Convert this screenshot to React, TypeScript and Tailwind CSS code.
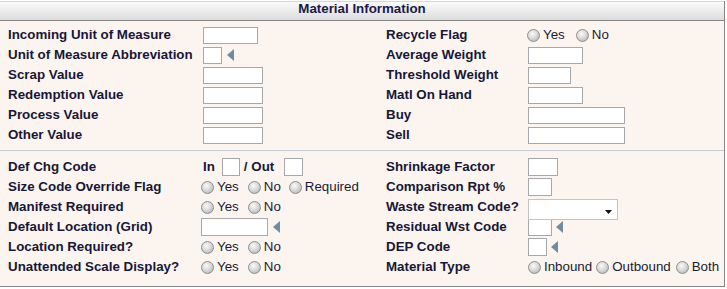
import React from "react";

const Box = ({ w, h = 17, className = "" }: { w: number; h?: number; className?: string }) => (
  <span
    className={`block bg-white border border-[#a7a7ae] box-border ${className}`}
    style={{ width: w, height: h }}
  />
);

const Tri = ({ className = "" }: { className?: string }) => (
  <span
    className={`block w-0 h-0 border-y-[6px] border-y-transparent border-r-[7px] border-r-[#6f8ca3] ${className}`}
  />
);

const Radio = ({ label, className = "" }: { label: string; className?: string }) => (
  <span className={`flex items-center ${className}`}>
    <span className="block w-[13px] h-[13px] mt-[2px] rounded-full border border-[#8e8e8e] box-border bg-[radial-gradient(circle_at_40%_35%,#fafafa_0%,#dadada_45%,#aaaaaa_100%)]" />
    <span className="ml-[3px] font-normal text-[#1a1a36]">{label}</span>
  </span>
);

const Row = ({
  label,
  labelW,
  children,
}: {
  label: string;
  labelW: string;
  children?: React.ReactNode;
}) => (
  <div className="flex items-center h-[20px]">
    <span className={`${labelW} shrink-0 font-bold text-[#17173a] whitespace-nowrap`}>{label}</span>
    <div className="flex items-center h-[20px]">{children}</div>
  </div>
);

export default function App() {
  const L = "w-[195px]";
  const R = "w-[142px]";
  return (
    <div className="w-[727px] h-[289px] bg-white font-['Liberation_Sans',Arial,sans-serif] text-[13.33px]">
      <div className="w-[725px] mt-px border-r border-b border-[#858585] bg-[#fcf5ef]">
        {/* Header */}
        <div className="h-[20px] box-border border-t border-[#d6d6d6] border-b border-b-[#858585] bg-[linear-gradient(#fbfbfb,#dcdcdc)] flex justify-center items-start">
          <span className="font-bold leading-[14px] text-[#1a1a4a]">Material Information</span>
        </div>

        {/* Section 1 */}
        <div className="flex pt-[4px] pb-[5px]">
          <div className="w-[386px] pl-[8px]">
            <Row label="Incoming Unit of Measure" labelW={L}>
              <Box w={55} />
            </Row>
            <Row label="Unit of Measure Abbreviation" labelW={L}>
              <Box w={19} />
              <Tri className="ml-[5px]" />
            </Row>
            <Row label="Scrap Value" labelW={L}>
              <Box w={60} />
            </Row>
            <Row label="Redemption Value" labelW={L}>
              <Box w={60} />
            </Row>
            <Row label="Process Value" labelW={L}>
              <Box w={60} />
            </Row>
            <Row label="Other Value" labelW={L}>
              <Box w={60} />
            </Row>
          </div>
          <div>
            <Row label="Recycle Flag" labelW={R}>
              <Radio label="Yes" className="-ml-px" />
              <Radio label="No" className="ml-[11px]" />
            </Row>
            <Row label="Average Weight" labelW={R}>
              <Box w={55} />
            </Row>
            <Row label="Threshold Weight" labelW={R}>
              <Box w={43} />
            </Row>
            <Row label="Matl On Hand" labelW={R}>
              <Box w={55} />
            </Row>
            <Row label="Buy" labelW={R}>
              <Box w={97} />
            </Row>
            <Row label="Sell" labelW={R}>
              <Box w={97} />
            </Row>
          </div>
        </div>

        {/* Section 2 */}
        <div className="flex border-t border-[#c6cdd8] pt-[6px] pb-[9px]">
          <div className="w-[386px] pl-[8px]">
            <Row label="Def Chg Code" labelW={L}>
              <span className="font-bold text-[#17173a]">In</span>
              <Box w={18} h={18} className="ml-[7px]" />
              <span className="ml-[4px] font-bold text-[#17173a] whitespace-nowrap">/ Out</span>
              <Box w={19} h={18} className="ml-[10px]" />
            </Row>
            <Row label="Size Code Override Flag" labelW={L}>
              <Radio label="Yes" className="-ml-[2px]" />
              <Radio label="No" className="ml-[9px]" />
              <Radio label="Required" className="ml-[8px]" />
            </Row>
            <Row label="Manifest Required" labelW={L}>
              <Radio label="Yes" className="-ml-[2px]" />
              <Radio label="No" className="ml-[9px]" />
            </Row>
            <Row label="Default Location (Grid)" labelW={L}>
              <Box w={67} h={18} className="-ml-[2px]" />
              <Tri className="ml-[5px]" />
            </Row>
            <Row label="Location Required?" labelW={L}>
              <Radio label="Yes" className="-ml-[2px]" />
              <Radio label="No" className="ml-[9px]" />
            </Row>
            <Row label="Unattended Scale Display?" labelW={L}>
              <Radio label="Yes" className="-ml-[2px]" />
              <Radio label="No" className="ml-[9px]" />
            </Row>
          </div>
          <div>
            <Row label="Shrinkage Factor" labelW={R}>
              <Box w={30} h={18} />
            </Row>
            <Row label="Comparison Rpt %" labelW={R}>
              <Box w={24} h={18} />
            </Row>
            <Row label="Waste Stream Code?" labelW={R}>
              <span className="relative block w-[90px] h-[21px] mt-[4px] bg-white border border-[#c4c4c4] box-border">
                <svg
                  className="absolute right-[5px] top-[10px]"
                  width="7"
                  height="4"
                  viewBox="0 0 7 4"
                >
                  <path d="M0 0H7L3.5 4Z" fill="#111" />
                </svg>
              </span>
            </Row>
            <Row label="Residual Wst Code" labelW={R}>
              <Box w={24} h={18} />
              <Tri className="ml-[4px]" />
            </Row>
            <Row label="DEP Code" labelW={R}>
              <Box w={19} h={18} />
              <Tri className="ml-[4px]" />
            </Row>
            <Row label="Material Type" labelW={R}>
              <Radio label="Inbound" />
              <Radio label="Outbound" className="ml-[4px]" />
              <Radio label="Both" className="ml-[5px]" />
            </Row>
          </div>
        </div>
      </div>
    </div>
  );
}
